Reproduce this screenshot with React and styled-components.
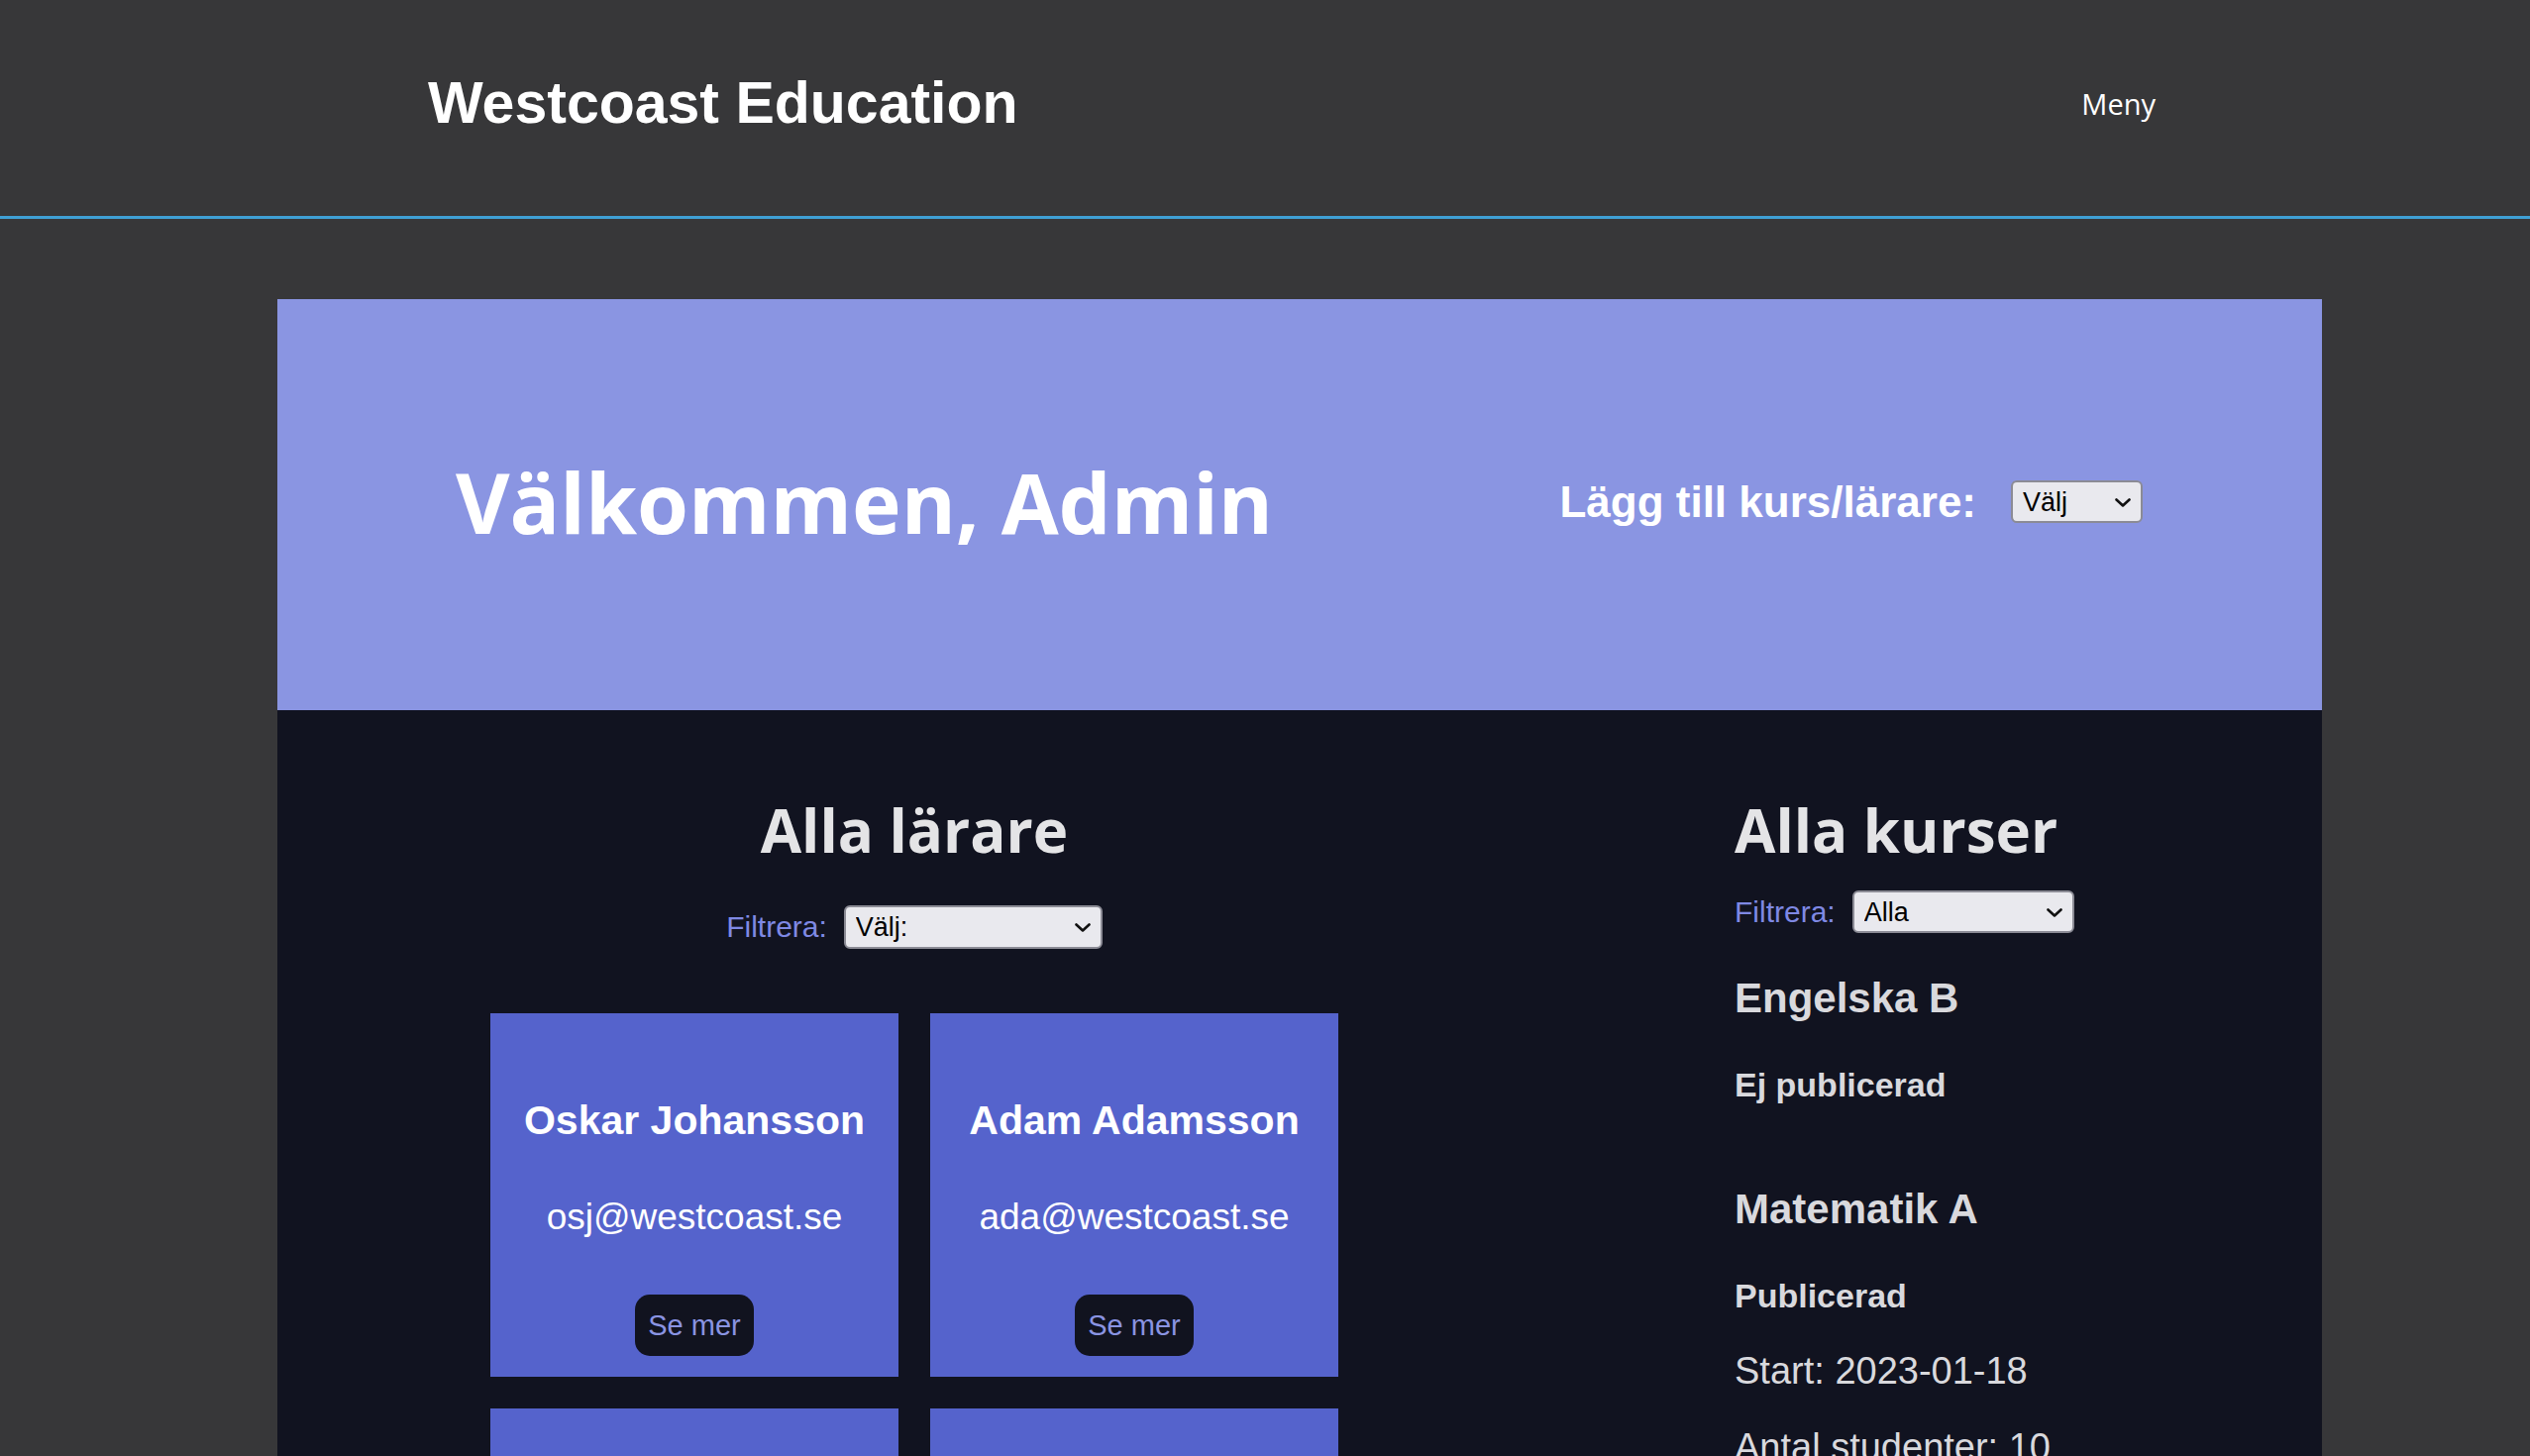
import React from "react";
import styled, { createGlobalStyle } from "styled-components";

const teachers = [
  { name: "Oskar Johansson", email: "osj@westcoast.se" },
  { name: "Adam Adamsson", email: "ada@westcoast.se" },
  { name: "Eva Svensson", email: "eva@westcoast.se" },
  { name: "Lisa Berg", email: "lib@westcoast.se" },
];

const courses = [
  { title: "Engelska B", published: false },
  {
    title: "Matematik A",
    published: true,
    start: "2023-01-18",
    students: 10,
  },
];

const Dropdown = ({ width, height, options }) => (
  <SelectBox>
    <Select $w={width} $h={height} defaultValue={options[0]}>
      {options.map((o) => (
        <option key={o} value={o}>
          {o}
        </option>
      ))}
    </Select>
    <Chevron viewBox="0 0 16 9" aria-hidden="true">
      <polyline points="1.5,1.5 8,7.5 14.5,1.5" />
    </Chevron>
  </SelectBox>
);

const App = () => {
  return (
    <>
      <GlobalStyle />
      <Header>
        <Logo>Westcoast Education</Logo>
        <MenuLink href="#">Meny</MenuLink>
      </Header>
      <Panel>
        <Hero>
          <HeroTitle>Välkommen, Admin</HeroTitle>
          <AddGroup>
            <AddLabel>Lägg till kurs/lärare:</AddLabel>
            <Dropdown width={133} options={["Välj", "Kurs", "Lärare"]} />
          </AddGroup>
        </Hero>
        <Main>
          <TeacherColumn>
            <SectionTitle>Alla lärare</SectionTitle>
            <FilterRow $top={39}>
              <FilterLabel>Filtrera:</FilterLabel>
              <Dropdown width={261} height={44} options={["Välj:"]} />
            </FilterRow>
            <CardGrid>
              {teachers.map((t) => (
                <Card key={t.email}>
                  <CardName>{t.name}</CardName>
                  <CardEmail>{t.email}</CardEmail>
                  <MoreButton>Se mer</MoreButton>
                </Card>
              ))}
            </CardGrid>
          </TeacherColumn>
          <CourseColumn>
            <SectionTitle>Alla kurser</SectionTitle>
            <FilterRow $top={24}>
              <FilterLabel>Filtrera:</FilterLabel>
              <Dropdown width={224} options={["Alla"]} />
            </FilterRow>
            <CourseList>
              {courses.map((c) => (
                <Course key={c.title}>
                  <CourseTitle>{c.title}</CourseTitle>
                  <CourseStatus>
                    {c.published ? "Publicerad" : "Ej publicerad"}
                  </CourseStatus>
                  {c.start && <CourseInfo>Start: {c.start}</CourseInfo>}
                  {c.students && (
                    <CourseInfo>Antal studenter: {c.students}</CourseInfo>
                  )}
                </Course>
              ))}
            </CourseList>
          </CourseColumn>
        </Main>
      </Panel>
    </>
  );
};

export default App;

const GlobalStyle = createGlobalStyle`
  * {
    box-sizing: border-box;
  }
  html, body {
    margin: 0;
    padding: 0;
    background: #373739;
    overflow: hidden;
  }
  body {
    font-family: "Liberation Sans", Arial, sans-serif;
  }
`;

const Header = styled.header`
  height: 221px;
  display: flex;
  align-items: center;
  justify-content: space-between;
  padding: 0 378px 10px 432px;
  border-bottom: 3px solid #3f9fd4;
`;

const Logo = styled.h1`
  margin: 0;
  font-size: 59px;
  line-height: 1;
  font-weight: 700;
  color: #fff;
`;

const MenuLink = styled.a`
  font-family: "Open Sans", sans-serif;
  font-size: 29px;
  color: #fff;
  text-decoration: none;
`;

const Panel = styled.div`
  margin: 81px 210px 0 280px;
`;

const Hero = styled.section`
  height: 415px;
  background: #8a95e2;
  display: flex;
  align-items: center;
  justify-content: space-between;
  padding: 0 181px 6px 180px;
`;

const HeroTitle = styled.h1`
  margin: 0;
  font-family: "Open Sans", sans-serif;
  font-size: 84px;
  line-height: 1;
  font-weight: 700;
  color: #fff;
`;

const AddGroup = styled.div`
  display: flex;
  align-items: center;
  gap: 35px;
`;

const AddLabel = styled.span`
  font-size: 44px;
  font-weight: 700;
  color: #fff;
`;

const SelectBox = styled.div`
  position: relative;
  display: inline-flex;
`;

const Select = styled.select`
  appearance: none;
  width: ${(p) => p.$w}px;
  height: ${(p) => p.$h || 43}px;
  padding: 0 10px;
  font-family: "Liberation Sans", Arial, sans-serif;
  font-size: 27px;
  color: #000;
  background: #e9e9ee;
  border: 2px solid #8b8b95;
  border-radius: 6px;
`;

const Chevron = styled.svg`
  position: absolute;
  right: 12px;
  top: 50%;
  width: 16px;
  height: 9px;
  margin-top: -4px;
  fill: none;
  stroke: #111;
  stroke-width: 2.6;
  stroke-linecap: round;
  stroke-linejoin: round;
  pointer-events: none;
`;

const Main = styled.section`
  background: #111320;
  display: grid;
  grid-template-columns: 1286px 1fr;
  padding-top: 84px;
  min-height: 900px;
`;

const TeacherColumn = styled.div`
  display: flex;
  flex-direction: column;
  align-items: center;
`;

const CourseColumn = styled.div`
  padding-left: 185px;
`;

const SectionTitle = styled.h2`
  margin: 0;
  font-family: "Open Sans", sans-serif;
  font-size: 60px;
  line-height: 74px;
  font-weight: 700;
  color: #e4e4e6;
`;

const FilterRow = styled.div`
  display: flex;
  align-items: center;
  gap: 17px;
  margin-top: ${(p) => p.$top}px;
`;

const FilterLabel = styled.label`
  font-size: 30px;
  color: #7f89e4;
`;

const CardGrid = styled.div`
  margin-top: 65px;
  display: grid;
  grid-template-columns: repeat(2, 412px);
  gap: 32px;
`;

const Card = styled.article`
  height: 367px;
  background: #5563cc;
  display: flex;
  flex-direction: column;
  align-items: center;
  padding-top: 83px;
`;

const CardName = styled.h3`
  margin: 0;
  font-size: 41px;
  line-height: 50px;
  font-weight: 700;
  color: #fff;
`;

const CardEmail = styled.p`
  margin: 51px 0 0;
  font-size: 37px;
  line-height: 44px;
  color: #fff;
`;

const MoreButton = styled.button`
  margin-top: 56px;
  height: 62px;
  padding: 0 13px;
  border: none;
  border-radius: 15px;
  background: #11131f;
  color: #8a94e2;
  font-family: "Liberation Sans", Arial, sans-serif;
  font-size: 29px;
  cursor: pointer;
`;

const CourseList = styled.div`
  margin-top: 41px;
`;

const Course = styled.div`
  margin-bottom: 80px;
  color: #d9d9dd;
`;

const CourseTitle = styled.h3`
  margin: 0;
  font-size: 42px;
  line-height: 50px;
  font-weight: 700;
`;

const CourseStatus = styled.p`
  margin: 42px 0 0;
  font-size: 34px;
  line-height: 41px;
  font-weight: 700;
`;

const CourseInfo = styled.p`
  margin: 33px 0 0;
  font-size: 38px;
  line-height: 44px;
`;
